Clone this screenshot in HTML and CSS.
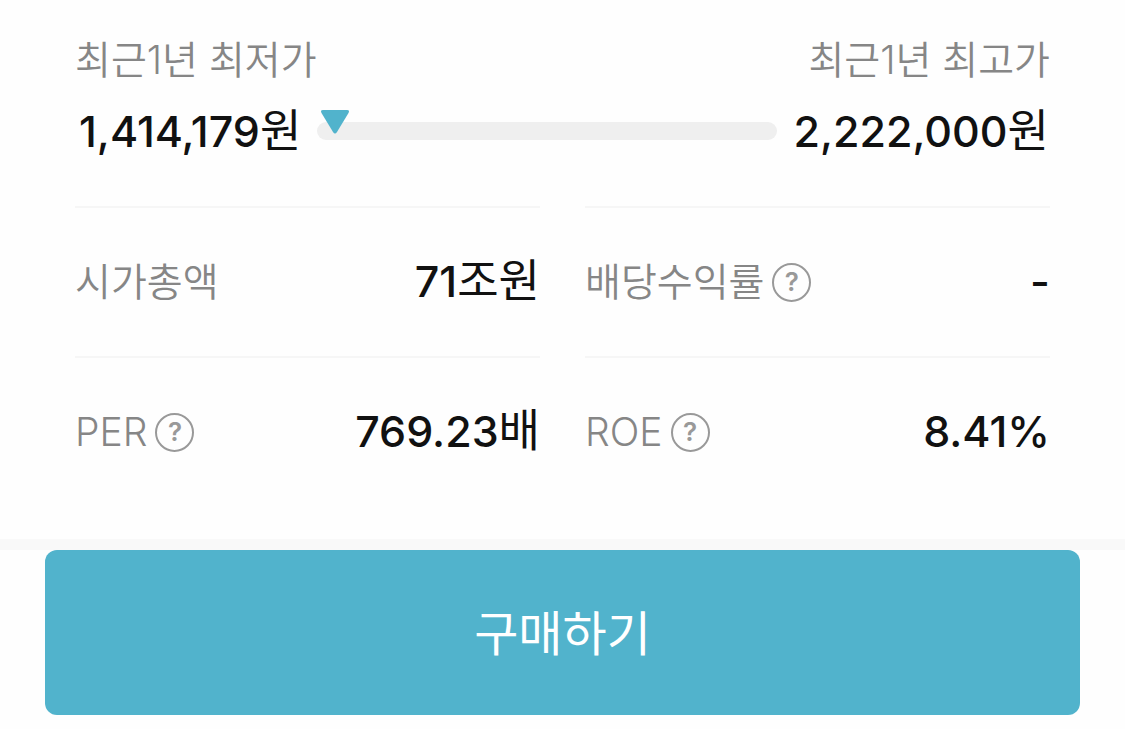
FILE: index.html
```
<!DOCTYPE html>
<html lang="ko">
<head>
    <meta charset="UTF-8">
    <meta name="viewport" content="width=device-width, initial-scale=1.0">
    <title>종목 정보</title>
    <link rel="stylesheet" href="styles.css">
</head>
<body>
  <main class="info">
    <section class="range">
      <div class="range-labels">
        <span>최근1년 최저가</span>
        <span>최근1년 최고가</span>
      </div>
      <div class="range-row">
        <strong class="value">1,414,179<span class="unit">원</span></strong>
        <div class="bar">
          <svg class="marker" viewBox="0 0 28 24" aria-hidden="true">
            <path d="M2 0H26Q29 0 27.500 3L16 22Q14 25 12 22L.5 3Q-1 0 2 0Z"/>
          </svg>
        </div>
        <strong class="value">2,222,000<span class="unit">원</span></strong>
      </div>
    </section>

    <dl class="stats">
      <div class="stat">
        <dt>시가총액</dt>
        <dd class="value">71<span class="unit">조원</span></dd>
      </div>
      <div class="stat">
        <dt>배당수익률 <button class="help" type="button">?</button></dt>
        <dd class="value">-</dd>
      </div>
      <div class="stat">
        <dt>PER <button class="help" type="button">?</button></dt>
        <dd class="value">769.23<span class="unit">배</span></dd>
      </div>
      <div class="stat">
        <dt>ROE <button class="help" type="button">?</button></dt>
        <dd class="value">8.41%</dd>
      </div>
    </dl>
  </main>

  <footer class="footer">
    <button class="buy" type="button">구매하기</button>
  </footer>
</body>
</html>
```
FILE: styles.css
```
*{
    box-sizing: border-box;
}

body{
    margin: 0;
    background: #fefefe;
    color: #111;
    font-family: Inter, "Noto Sans CJK KR", sans-serif;
}

button{
    font-family: inherit;
    cursor: pointer;
}

.info{
    padding: 32px 75px 33px;
}

.range-labels{
    display: flex;
    justify-content: space-between;
    font-size: 39px;
    font-weight: 350;
    line-height: 56px;
    color: #868686;
}

.range-row{
    display: flex;
    align-items: center;
    gap: 16px;
    padding: 11px 1px 43px 4px;
}

.value{
    margin: 0;
    font-size: 43px;
    font-weight: 500;
    line-height: 64px;
    white-space: nowrap;
}

.unit{
    font-size: 45px;
    font-weight: 400;
}

.bar{
    position: relative;
    flex: 1;
    height: 18px;
    border-radius: 9px;
    background: #efefef;
}

/* low-high position of the current price */
.marker{
    position: absolute;
    left: 4px;
    top: -12px;
    width: 28px;
    height: 24px;
    fill: #51b3cc;
}

.stats{
    display: grid;
    grid-template-columns: 1fr 1fr;
    column-gap: 45px;
    margin: 0;
}

.stat{
    display: flex;
    justify-content: space-between;
    align-items: center;
    height: 150px;
    border-top: 2px solid #f6f6f6;
}

.stat dt{
    display: flex;
    align-items: center;
    gap: 8px;
    font-size: 39px;
    font-weight: 350;
    line-height: 56px;
    color: #868686;
}

.stat dd{
    padding-bottom: 2px;
}

.help{
    width: 39px;
    height: 39px;
    padding: 0;
    border: 2px solid #999;
    border-radius: 50%;
    background: none;
    color: #999;
    font-size: 26px;
    font-weight: 600;
    line-height: 34px;
}

.footer{
    padding: 0 45px 14px;
    border-top: 11px solid #f9f9f9;
}

.buy{
    display: block;
    width: 100%;
    height: 165px;
    padding: 0 0 6px;
    border: none;
    border-radius: 12px;
    background: #51b3cc;
    color: #fff;
    font-size: 48px;
    font-weight: 400;
}
```
